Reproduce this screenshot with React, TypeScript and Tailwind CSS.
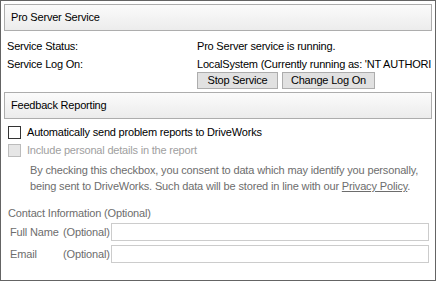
import React from "react";

const ms = { fontFamily: '"Liberation Sans", Arial, sans-serif', letterSpacing: "-0.2px" };
const seg = { fontFamily: '"Liberation Sans", Arial, sans-serif', letterSpacing: "-0.15px" };

function Header({ title }: { title: string }) {
  return (
    <div className="mx-[3px] h-[27px] border border-[#adadad] bg-gradient-to-b from-[#fbfbfb] to-[#ececec] flex items-center pl-[6px] text-[11px] text-black" style={ms}>
      {title}
    </div>
  );
}

export default function App() {
  return (
    <div className="w-[436px] h-[281px] border border-[#646464] bg-white overflow-hidden relative text-black" style={ms}>
      <div className="pt-[3px]">
        <Header title="Pro Server Service" />
      </div>
      <div className="flex text-[11px] mt-[6px]">
        <div className="w-[196px] shrink-0 pl-[6px] flex flex-col">
          <div className="h-[18px] flex items-center">Service Status:</div>
          <div className="h-[18px] flex items-center">Service Log On:</div>
        </div>
        <div className="flex-1 flex flex-col min-w-0 mr-[4px]">
          <div className="h-[18px] flex items-center whitespace-nowrap">Pro Server service is running.</div>
          <div className="h-[18px] flex items-center whitespace-nowrap overflow-hidden">LocalSystem (Currently running as: 'NT AUTHORITY\SYSTEM')</div>
          <div className="flex gap-[4px] mt-[-1px]">
            <div className="w-[81px] h-[17px] border border-[#adadad] bg-[#e1e1e1] flex items-center justify-center whitespace-nowrap">Stop Service</div>
            <div className="w-[93px] h-[17px] border border-[#adadad] bg-[#e1e1e1] flex items-center justify-center whitespace-nowrap">Change Log On</div>
          </div>
        </div>
      </div>
      <div className="mt-[3px]">
        <Header title="Feedback Reporting" />
      </div>
      <div className="text-[11px] pl-[7px] mt-[7px]">
        <div className="flex items-center h-[13px] gap-[6px]">
          <div className="w-[13px] h-[13px] border border-[#333] bg-white" />
          <span>Automatically send problem reports to DriveWorks</span>
        </div>
        <div className="flex items-center h-[13px] gap-[6px] mt-[5px]">
          <div className="w-[13px] h-[13px] border border-[#bcbcbc] bg-[#e6e6e6]" />
          <span className="text-[#a0a0a0]">Include personal details in the report</span>
        </div>
      </div>
      <div className="pl-[29px] mt-[5px] text-[11px] leading-[16px] text-[#6d6d6d] whitespace-nowrap" style={seg}>
        <div>By checking this checkbox, you consent to data which may identify you personally,</div>
        <div>being sent to DriveWorks. Such data will be stored in line with our <span className="underline">Privacy Policy</span>.</div>
      </div>
      <div className="pl-[7px] mt-[11px] text-[11px] text-[#6d6d6d] whitespace-nowrap" style={seg}>
        <div className="h-[16px] flex items-center">Contact Information (Optional)</div>
        <div className="flex items-center mt-[2px] h-[18px]">
          <span className="w-[55px] pl-[2px]">Full Name</span>
          <span className="w-[48px]">(Optional)</span>
          <div className="w-[318px] h-[18px] border border-[#cccccc] bg-white" />
        </div>
        <div className="flex items-center mt-[4px] h-[18px]">
          <span className="w-[55px] pl-[2px]">Email</span>
          <span className="w-[48px]">(Optional)</span>
          <div className="w-[318px] h-[18px] border border-[#cccccc] bg-white" />
        </div>
      </div>
    </div>
  );
}
